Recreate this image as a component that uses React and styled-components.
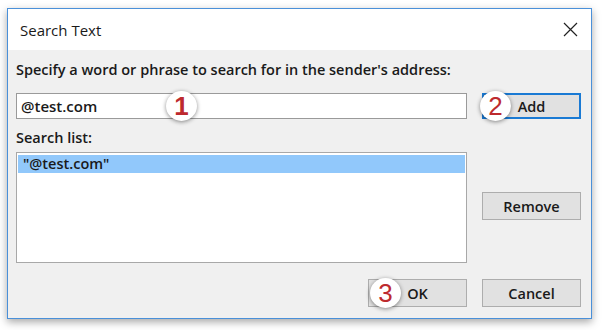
import React from "react";
import styled, { createGlobalStyle } from "styled-components";

const GlobalStyle = createGlobalStyle`
  body {
    margin: 0;
    background: #ffffff;
    font-family: "Open Sans", "Liberation Sans", sans-serif;
  }
`;

const Screen = styled.div`
  width: 603px;
  height: 330px;
  padding: 8px 0 0 7px;
  box-sizing: border-box;
`;

const Window = styled.div`
  width: 585px;
  height: 311px;
  box-sizing: border-box;
  border: 1px solid #4a90d9;
  background: #f0f0f0;
  box-shadow: 0 3px 8px rgba(0, 0, 0, 0.35);
  display: flex;
  flex-direction: column;
`;

const TitleBar = styled.div`
  height: 41px;
  background: #ffffff;
  display: flex;
  align-items: center;
  justify-content: space-between;
  padding: 0 13px 0 12px;
`;

const Title = styled.span`
  font-size: 15px;
  color: #1a1a1a;
`;

const Body = styled.div`
  flex: 1;
  padding: 11px 10px 0 8px;
  display: flex;
  flex-direction: column;
`;

const Label = styled.div`
  font-size: 14.5px;
  font-weight: 600;
  color: #1a1a1a;
  line-height: 18px;
  white-space: nowrap;
  margin-top: ${(p) => p.$top || 0}px;
`;

const Row = styled.div`
  display: flex;
  gap: 15px;
  margin-top: ${(p) => p.$top || 0}px;
  justify-content: ${(p) => (p.$end ? "flex-end" : "flex-start")};
`;

const Field = styled.div`
  position: relative;
  flex: 1;
  height: 26px;
  box-sizing: border-box;
  background: #ffffff;
  border: 1px solid #9a9a9a;
  display: flex;
  align-items: center;
  padding-left: 4px;
  font-size: 15px;
  font-weight: 600;
  color: #1a1a1a;
`;

const ListBox = styled.div`
  flex: 1;
  height: 111px;
  box-sizing: border-box;
  background: #ffffff;
  border: 1px solid #a8a8a8;
  padding: 2px 1px;
`;

const ListItem = styled.div`
  height: 18px;
  line-height: 18px;
  background: ${(p) => (p.$selected ? "#91c8fb" : "transparent")};
  padding-left: 5px;
  font-size: 14.5px;
  font-weight: 600;
  color: #1a1a1a;
`;

const Side = styled.div`
  width: 99px;
  padding-top: 40px;
`;

const ButtonWrap = styled.div`
  position: relative;
  width: 99px;
`;

const Button = styled.div`
  width: 99px;
  height: ${(p) => p.$h || 28}px;
  box-sizing: border-box;
  background: #e1e1e1;
  border: ${(p) => (p.$primary ? "2px solid #1a7ad4" : "1px solid #adadad")};
  display: flex;
  align-items: center;
  justify-content: center;
  font-size: 14.5px;
  font-weight: 600;
  color: #1a1a1a;
`;

const Badge = styled.div`
  position: absolute;
  left: ${(p) => p.$left}px;
  top: ${(p) => p.$top}px;
  width: 31px;
  height: 30px;
  border-radius: 50%;
  background: #ffffff;
  box-shadow: 0 1px 4px rgba(0, 0, 0, 0.45);
  display: flex;
  align-items: center;
  justify-content: center;
  font-family: "Liberation Sans", Arial, sans-serif;
  font-size: 26px;
  color: #bd2a2e;
  line-height: 1;
`;

const CloseIcon = () => (
  <svg width="15" height="15" viewBox="0 0 15 15">
    <path d="M1 1 L14 14 M14 1 L1 14" stroke="#222" strokeWidth="1.2" />
  </svg>
);

export default function App() {
  return (
    <>
      <GlobalStyle />
      <Screen>
        <Window>
          <TitleBar>
            <Title>Search Text</Title>
            <CloseIcon />
          </TitleBar>
          <Body>
            <Label>Specify a word or phrase to search for in the sender's address:</Label>
            <Row $top={14}>
              <Field>
                @test.com
                <Badge $left={149} $top={-3}>1</Badge>
              </Field>
              <ButtonWrap>
                <Button $primary $h={26}>Add</Button>
                <Badge $left={-2} $top={-2}>2</Badge>
              </ButtonWrap>
            </Row>
            <Label $top={10}>Search list:</Label>
            <Row $top={5}>
              <ListBox>
                <ListItem $selected>"@test.com"</ListItem>
              </ListBox>
              <Side>
                <Button>Remove</Button>
              </Side>
            </Row>
            <Row $top={16} $end>
              <ButtonWrap>
                <Button>OK</Button>
                <Badge $left={2} $top={-1}>3</Badge>
              </ButtonWrap>
              <ButtonWrap>
                <Button>Cancel</Button>
              </ButtonWrap>
            </Row>
          </Body>
        </Window>
      </Screen>
    </>
  );
}
